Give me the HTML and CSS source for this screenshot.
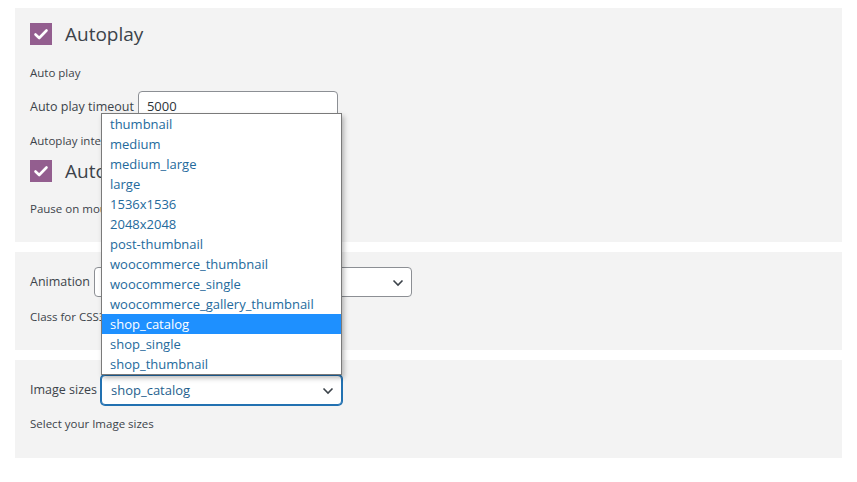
FILE: index.html
```html
<!DOCTYPE html>
<html lang="en">
<head>
<meta charset="utf-8">
<title>Slider settings</title>
<link rel="stylesheet" href="styles.css">
</head>
<body>
<main class="page">
  <section class="panel panel-main">
    <div class="check-row">
      <span class="checkbox"><svg viewBox="0 0 22 22" width="22" height="22"><path d="M5.5 11.5 L9.2 15 L16.5 7.5" fill="none" stroke="#fff" stroke-width="2.6" stroke-linecap="round" stroke-linejoin="round"/></svg></span>
      <span class="check-title">Autoplay</span>
    </div>
    <p class="desc desc-a">Auto play</p>
    <div class="field-row field-timeout">
      <label class="label">Auto play timeout</label>
      <div class="input">5000</div>
    </div>
    <p class="desc desc-b">Autoplay interval timeout</p>
    <div class="check-row check-row-2">
      <span class="checkbox"><svg viewBox="0 0 22 22" width="22" height="22"><path d="M5.5 11.5 L9.2 15 L16.5 7.5" fill="none" stroke="#fff" stroke-width="2.6" stroke-linecap="round" stroke-linejoin="round"/></svg></span>
      <span class="check-title">Autoplay hover pause</span>
    </div>
    <p class="desc desc-c">Pause on mouse hover</p>
  </section>

  <section class="panel panel-small">
    <div class="field-row">
      <label class="label">Animation</label>
      <div class="select select-anim">
        <span class="select-value"></span>
        <svg class="chev" viewBox="0 0 12 8" width="12" height="8"><path d="M1.5 1.5 L6 6 L10.5 1.5" fill="none" stroke="#3c434a" stroke-width="1.6"/></svg>
      </div>
    </div>
    <p class="desc desc-d">Class for CSS3 animation</p>
  </section>

  <section class="panel panel-small">
    <div class="field-row">
      <label class="label">Image sizes</label>
      <div class="select select-img">
        <span class="select-value">shop_catalog</span>
        <svg class="chev" viewBox="0 0 12 8" width="12" height="8"><path d="M1.5 1.5 L6 6 L10.5 1.5" fill="none" stroke="#3c434a" stroke-width="1.6"/></svg>
        <ul class="dropdown">
          <li>thumbnail</li>
          <li>medium</li>
          <li>medium_large</li>
          <li>large</li>
          <li>1536x1536</li>
          <li>2048x2048</li>
          <li>post-thumbnail</li>
          <li>woocommerce_thumbnail</li>
          <li>woocommerce_single</li>
          <li>woocommerce_gallery_thumbnail</li>
          <li class="active">shop_catalog</li>
          <li>shop_single</li>
          <li>shop_thumbnail</li>
        </ul>
      </div>
    </div>
    <p class="desc desc-e">Select your Image sizes</p>
  </section>
</main>
</body>
</html>
```

FILE: styles.css
```css
* { box-sizing: border-box; }
html, body { margin: 0; padding: 0; background: #fff; }
body {
  font-family: "Open Sans", "Noto Sans", sans-serif;
  color: #3c434a;
}
.page {
  display: flex;
  flex-direction: column;
  gap: 10px;
  padding: 8px 15px 0 15px;
}
.panel {
  background: #f3f3f3;
  padding: 15px 15px 0 15px;
}
.panel-main { height: 234px; }
.panel-small { height: 98px; }

.check-row {
  display: flex;
  align-items: center;
  height: 22px;
}
.checkbox {
  width: 22px;
  height: 22px;
  background: #935e8f;
  display: flex;
  align-items: center;
  justify-content: center;
  flex: none;
}
.check-title {
  margin-left: 13px;
  font-size: 19px;
  line-height: 22px;
  color: #3c434a;
  white-space: nowrap;
}
.check-row-2 { margin-top: 10px; height: 21px; }

.desc {
  margin: 0;
  font-size: 11.5px;
  line-height: 18px;
  white-space: nowrap;
}
.desc-a { margin-top: 19px; }
.desc-b { margin-top: 9px; }
.desc-c { margin-top: 19px; }
.desc-d { margin-top: 11px; }
.desc-e { margin-top: 10px; }

.field-row {
  display: flex;
  align-items: center;
  gap: 4px;
}
.field-timeout { margin-top: 9px; }
.label {
  font-size: 12.5px;
  line-height: 18px;
  white-space: nowrap;
}

.input {
  width: 200px;
  height: 32px;
  background: #fff;
  border: 1px solid #8c8f94;
  border-radius: 4px;
  padding: 0 8px;
  font-size: 13px;
  line-height: 28px;
  color: #2c3338;
}

.select {
  position: relative;
  height: 30px;
  background: #fff;
  border: 1px solid #8c8f94;
  border-radius: 4px;
  display: flex;
  align-items: center;
  padding: 0 8px;
}
.select-anim { width: 318px; }
.select-img {
  width: 241px;
  border-color: #2271b1;
  box-shadow: 0 0 0 1px #2271b1;
}
.select-value {
  flex: 1;
  font-size: 13px;
  color: #1f5f8e;
  padding-left: 1px;
}
.chev {
  position: absolute;
  right: 7px;
  top: 11px;
}

.dropdown {
  position: absolute;
  left: -1px;
  bottom: calc(100% + 1px);
  width: 241px;
  margin: 0;
  padding: 0;
  list-style: none;
  background: #fff;
  border: 1px solid #7a7a7a;
  box-shadow: 2px 3px 5px rgba(0, 0, 0, 0.28);
  z-index: 2;
}
.dropdown li {
  height: 20px;
  line-height: 20px;
  padding-left: 8px;
  font-size: 13px;
  color: #246a9c;
  white-space: nowrap;
}
.dropdown li.active {
  background: #1e90ff;
  color: #fff;
}
```
